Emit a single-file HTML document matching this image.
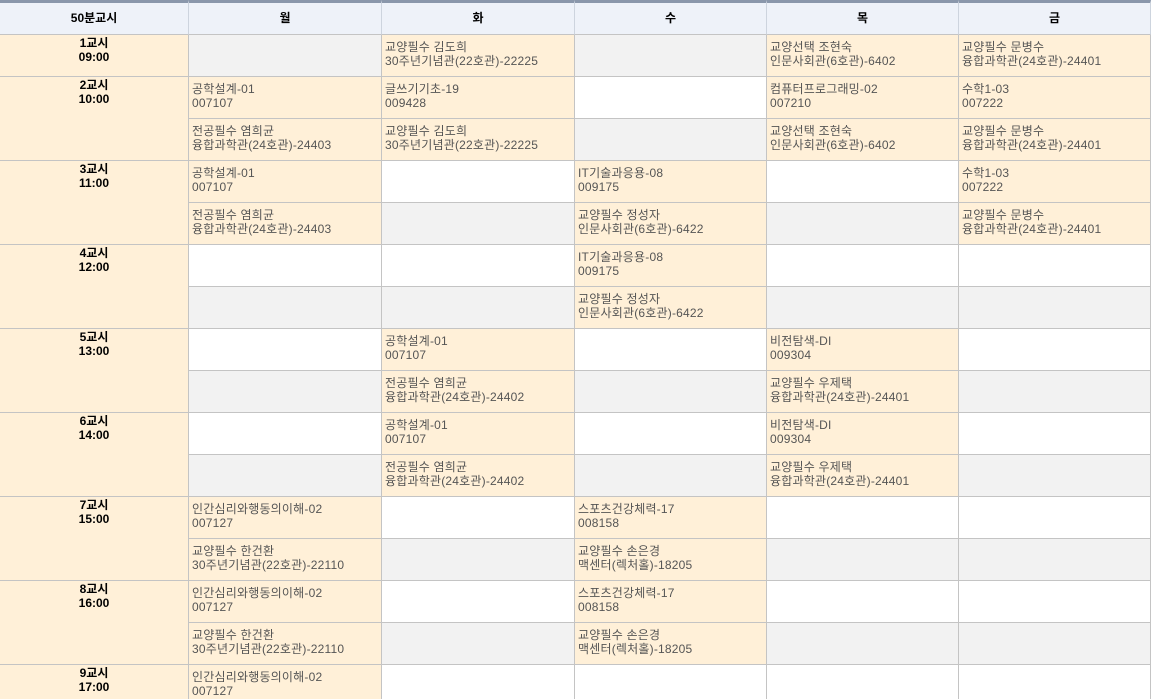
<!DOCTYPE html>
<html style="height:699px;overflow:hidden"><head><meta charset="utf-8"><style>
body{margin:0;width:1151px;height:699px;overflow:hidden;position:relative;background:#fff;font-family:"Liberation Sans","Noto Sans CJK KR","NanumGothic",sans-serif;}
.c{position:absolute;box-sizing:border-box;border-right:1px solid #c4c4c4;border-bottom:1px solid #c4c4c4;font-size:12px;line-height:14px;color:#555;padding:5px 0 0 3px;white-space:nowrap;overflow:hidden;letter-spacing:0.2px}
.O{background:#fff0d8}.W{background:#fff}.G{background:#f2f2f2}
.h{position:absolute;top:0;height:35px;box-sizing:border-box;background:#eef2f9;border-top:3px solid #8a97ab;border-right:1px solid #cdd4de;border-bottom:1px solid #c4c4c4;font-size:12px;font-weight:bold;color:#000;text-align:center;line-height:31px}
.t{position:absolute;left:0;width:189px;box-sizing:border-box;background:#fff0d8;border-right:1px solid #c4c4c4;border-bottom:1px solid #c4c4c4;font-size:12px;font-weight:bold;color:#000;text-align:center;line-height:14px;padding-top:1px}
</style></head><body>
<div id="g"></div>
<script>
var xs=[0,189,382,575,767,959,1151];
var H=["50분교시","월","화","수","목","금"];
var s="";
for(var i=0;i<6;i++)s+='<div class="h" style="left:'+xs[i]+'px;width:'+(xs[i+1]-xs[i])+'px">'+H[i]+'</div>';
var A=["교양필수 김도희","30주년기념관(22호관)-22225"],B=["교양선택 조현숙","인문사회관(6호관)-6402"],C=["교양필수 문병수","융합과학관(24호관)-24401"],
D=["공학설계-01","007107"],E=["전공필수 염희균","융합과학관(24호관)-24403"],F=["수학1-03","007222"],I=["IT기술과응용-08","009175"],J=["교양필수 정성자","인문사회관(6호관)-6422"],
K=["전공필수 염희균","융합과학관(24호관)-24402"],L=["비전탐색-DI","009304"],M=["교양필수 우제택","융합과학관(24호관)-24401"],
N=["인간심리와행동의이해-02","007127"],P=["스포츠건강체력-17","008158"],Q=["교양필수 한건환","30주년기념관(22호관)-22110"],R=["교양필수 손은경","맥센터(렉처홀)-18205"];
var rows=[
["G",A,"G",B,C],
[D,["글쓰기기초-19","009428"],"W",["컴퓨터프로그래밍-02","007210"],F],
[E,A,"G",B,C],
[D,"W",I,"W",F],
[E,"G",J,"G",C],
["W","W",I,"W","W"],
["G","G",J,"G","G"],
["W",D,"W",L,"W"],
["G",K,"G",M,"G"],
["W",D,"W",L,"W"],
["G",K,"G",M,"G"],
[N,"W",P,"W","W"],
[Q,"G",R,"G","G"],
[N,"W",P,"W","W"],
[Q,"G",R,"G","G"],
[N,"W","W","W","W"]];
for(var r=0;r<rows.length;r++){var yy=35+r*42;
for(var c=0;c<5;c++){var v=rows[r][c],cls,txt="";
if(typeof v=="string")cls=v;else{cls="O";txt=v[0]+"<br>"+v[1];}
s+='<div class="c '+cls+'" style="left:'+xs[c+1]+'px;top:'+yy+'px;width:'+(xs[c+2]-xs[c+1])+'px;height:42px">'+txt+'</div>';}}
var times=["09:00","10:00","11:00","12:00","13:00","14:00","15:00","16:00","17:00"];
for(var k=0;k<9;k++){var ty=k==0?35:35+(2*k-1)*42,th=k==0?42:84;
s+='<div class="t" style="top:'+ty+'px;height:'+th+'px">'+(k+1)+'교시<br>'+times[k]+'</div>';}
document.getElementById("g").innerHTML=s;
</script>
</body></html>
